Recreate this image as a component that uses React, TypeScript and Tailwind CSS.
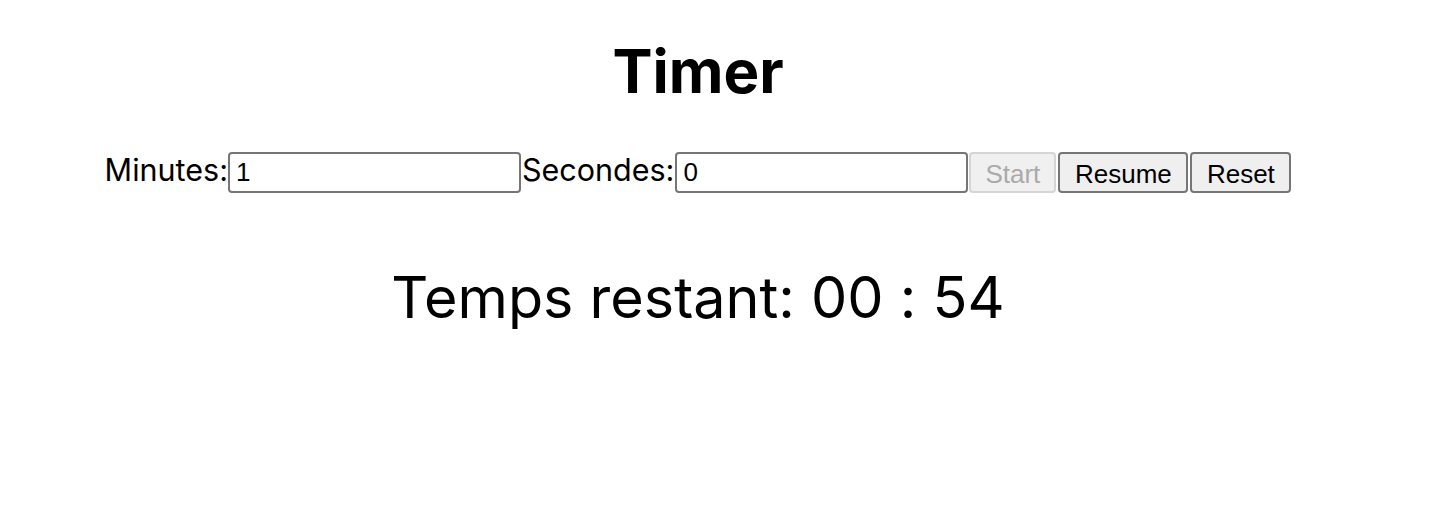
import { useState } from "react";

export default function App() {
  const [minutes, setMinutes] = useState("1");
  const [seconds, setSeconds] = useState("0");

  return (
    <div className="w-[1396px] bg-white text-black text-center font-['Inter',sans-serif] [font-feature-settings:'calt'_0]">
      <h1 className="pt-[35px] text-[60px] font-bold leading-[72px]">Timer</h1>
      <div className="mt-[42px] flex items-center justify-center text-[30.5px] leading-[41px]">
        <label htmlFor="min" className="pb-[5px]">Minutes:</label>
        <input
          id="min"
          type="text"
          value={minutes}
          onChange={(e) => setMinutes(e.target.value)}
          className="h-[41px] w-[293px] rounded-[4px] border-2 border-[#767676] px-[6px] font-['Liberation_Sans',Arial,sans-serif] text-[26px] outline-none"
        />
        <label htmlFor="sec" className="pb-[5px] pl-[1px]">Secondes:</label>
        <input
          id="sec"
          type="text"
          value={seconds}
          onChange={(e) => setSeconds(e.target.value)}
          className="ml-[1px] h-[41px] w-[293px] rounded-[4px] border-2 border-[#767676] px-[6px] font-['Liberation_Sans',Arial,sans-serif] text-[26px] outline-none"
        />
        <div className="flex gap-[2px] font-['Liberation_Sans',Arial,sans-serif] text-[26px]">
          <button
            disabled
            className="ml-[1px] h-[41px] w-[87px] rounded-[4px] border-2 border-[#d5d5d5] bg-[#f0f0f0] pb-[4px] text-[#aaaaaa]"
          >
            Start
          </button>
          <button className="h-[41px] w-[130px] rounded-[4px] border-2 border-[#767676] bg-[#efefef] pb-[4px]">
            Resume
          </button>
          <button className="h-[41px] w-[101px] rounded-[4px] border-2 border-[#767676] bg-[#efefef] pb-[4px]">
            Reset
          </button>
        </div>
      </div>
      <p className="mt-[67px] text-[57.5px] leading-[70px]">Temps restant: 00 : 54</p>
    </div>
  );
}
